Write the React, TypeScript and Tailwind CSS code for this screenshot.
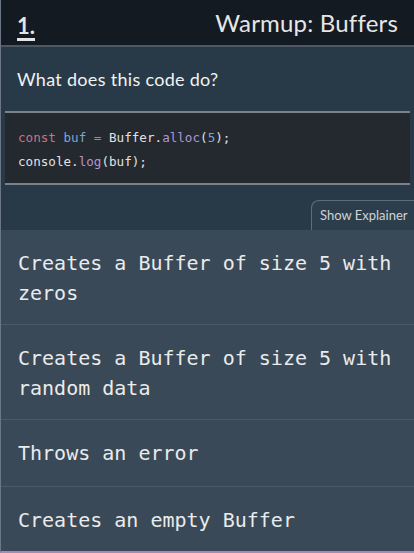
import React from 'react';

const options = [
  'Creates a Buffer of size 5 with zeros',
  'Creates a Buffer of size 5 with random data',
  'Throws an error',
  'Creates an empty Buffer',
];

const sans = { fontFamily: 'Lato, "Open Sans", sans-serif' };
const mono = { fontFamily: '"DejaVu Sans Mono", monospace' };

export default function App() {
  return (
    <div className="w-[414px] h-[553px] bg-[#394957] border-l border-[#6b7784] border-b-2 border-b-[#a58bb4] overflow-hidden flex flex-col">
      {/* header */}
      <div className="shrink-0 h-[47px] bg-[#131a21] flex items-center justify-between pl-[16px] pr-[16px] border-b-2 border-[#4c5864]" style={sans}>
        <span className="text-[22px] font-bold text-[#e4e4e4] underline underline-offset-[4px] decoration-[3px] mt-[6px]">1.</span>
        <span className="text-[24px] font-normal text-[#e6e6e6] tracking-[0.2px]">Warmup: Buffers</span>
      </div>

      {/* question */}
      <div className="shrink-0 bg-[#283a48] flex flex-col">
        <p className="text-[18px] tracking-[0.3px] text-[#f2f2f2] pl-[16px] pt-[19px] pb-[18px]" style={sans}>What does this code do?</p>
        <div className="mx-[4px] bg-[#24282f] border-y-2 border-[#7a838c] px-[13px] pt-[13px] pb-[9px] text-[12.6px] leading-[24px] text-[#e2e2e2]" style={mono}>
          <div>
            <span className="text-[#c97680]">const</span> <span className="text-[#74a6d8]">buf</span>{' '}
            <span className="text-[#c97680]">=</span> Buffer.<span className="text-[#b394d4]">alloc</span>(
            <span className="text-[#74a6d8]">5</span>);
          </div>
          <div>
            console.<span className="text-[#b394d4]">log</span>(buf);
          </div>
        </div>
        <div className="flex justify-end pt-[15px]">
          <button className="h-[30px] w-[103px] border-l border-t border-[#5f6d7a] rounded-tl-[8px] bg-[#2c3e4c] text-[13px] text-[#cfd3d7] pl-[8px] text-left" style={sans}>
            Show Explainer
          </button>
        </div>
      </div>

      {/* options */}
      <div className="shrink-0 flex flex-col">
        {options.map((o, i) => (
          <div
            key={o}
            className={`px-[17px] text-[20px] leading-[30px] text-[#ebebeb] border-b border-[#4b5a68] ${i < 2 ? 'pt-[18px] pb-[16px]' : 'pt-[18px] pb-[18px]'}`}
            style={mono}
          >
            {o}
          </div>
        ))}
      </div>
    </div>
  );
}
